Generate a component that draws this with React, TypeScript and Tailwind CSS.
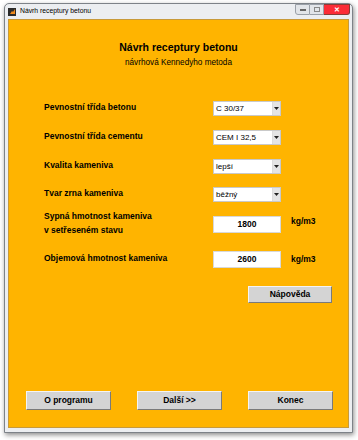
import React from "react";

const F = { fontFamily: '"Liberation Sans", Arial, sans-serif' };

function Select({ value }: { value: string }) {
  return (
    <div className="w-[68px] h-[15px] bg-white border border-[#c9c9c9] flex items-stretch">
      <div className="flex-1 text-[8px] leading-[13px] pl-[2px] text-black">{value}</div>
      <div className="w-[8px] bg-[#e4e4e4] border-l border-[#dcdcdc] flex items-center justify-center">
        <svg width="5" height="3" viewBox="0 0 5 3">
          <path d="M0 0 L5 0 L2.5 3 Z" fill="#222" />
        </svg>
      </div>
    </div>
  );
}

function NumInput({ value }: { value: string }) {
  return (
    <div className="w-[68px] h-[17px] bg-white border border-[#d8d8d8] text-[8.5px] font-bold leading-[15px] text-center text-black">
      {value}
    </div>
  );
}

function Btn({ label }: { label: string }) {
  return (
    <div className="w-[85px] h-[19px] bg-[#d4d4d4] border border-t-[#f4f4f4] border-l-[#f4f4f4] border-r-[#7a7a7a] border-b-[#7a7a7a] flex items-center justify-center text-[8.5px] font-bold text-black">
      {label}
    </div>
  );
}

function Row({ label, children, cls }: { label: React.ReactNode; children: React.ReactNode; cls: string }) {
  return (
    <div className={`flex items-center ${cls}`}>
      <div className="w-[169px] text-[8.5px] font-bold text-black leading-[14px] pb-[3px]">{label}</div>
      {children}
    </div>
  );
}

export default function App() {
  return (
    <div className="w-[358px] h-[440px] bg-white pt-[3px] pl-[4px]" style={F}>
      <div className="w-[349px] h-[430px] rounded-t-[5px] border border-[#7d8288] bg-[#eceef1] shadow-[1px_2px_5px_rgba(0,0,0,0.45)] flex flex-col">
        {/* title bar */}
        <div className="h-[15px] flex items-center pl-[3px] pr-[2px]">
          <div className="w-[8px] h-[8px] bg-[#2b2b2b] flex items-center justify-center">
            <svg width="7" height="7" viewBox="0 0 7 7">
              <path d="M1 6 L3 3 L4 4 L6 1 L6 6 Z" fill="#f08a1c" />
            </svg>
          </div>
          <span className="ml-[4px] text-[6.8px] text-black leading-none">Návrh receptury betonu</span>
          <div className="ml-auto self-start flex h-[11px]">
            <div className="w-[15px] border border-[#9aa0a8] rounded-bl-[3px] bg-[#e2e5e9] flex items-center justify-center">
              <div className="w-[6px] h-[2px] border border-[#666] bg-white" />
            </div>
            <div className="w-[14px] border-y border-r border-[#9aa0a8] bg-[#e2e5e9] flex items-center justify-center">
              <div className="w-[6px] h-[5px] border border-[#888]" />
            </div>
            <div className="w-[26px] border-y border-r border-[#8a3a34] rounded-br-[3px] bg-red-500 flex items-center justify-center">
              <span className="text-white text-[7px] font-bold leading-none">✕</span>
            </div>
          </div>
        </div>
        {/* content */}
        <div className="mx-[3px] mb-[4px] flex-1 bg-[#ffb400] border border-[#c89a3a] flex flex-col pl-[35px]">
          <div className="pr-[35px] text-center mt-[20px] text-[10.5px] font-bold leading-[14px] text-black">
            Návrh receptury betonu
          </div>
          <div className="pr-[35px] text-center mt-[3px] text-[8.2px] leading-[12px] text-black">
            návrhová Kennedyho metoda
          </div>
          <Row label="Pevnostní třída betonu" cls="mt-[32px] h-[15px]">
            <Select value="C 30/37" />
          </Row>
          <Row label="Pevnostní třída cementu" cls="mt-[14px] h-[15px]">
            <Select value="CEM I 32,5" />
          </Row>
          <Row label="Kvalita kameniva" cls="mt-[14px] h-[15px]">
            <Select value="lepší" />
          </Row>
          <Row label="Tvar zrna kameniva" cls="mt-[13px] h-[15px]">
            <Select value="běžný" />
          </Row>
          <div className="flex items-center mt-[14px] h-[17px]">
            <div className="w-[169px] text-[8.5px] font-bold text-black leading-[14px] pb-[3px]">
              Sypná hmotnost kameniva
              <br />v setřeseném stavu
            </div>
            <NumInput value="1800" />
            <span className="ml-[10px] text-[8.5px] font-bold text-black -mt-[7px]">kg/m3</span>
          </div>
          <Row label="Objemová hmotnost kameniva" cls="mt-[18px] h-[17px]">
            <NumInput value="2600" />
            <span className="ml-[10px] text-[8.5px] font-bold text-black">kg/m3</span>
          </Row>
          <div className="mt-[18px] pl-[204px]">
            <div className="w-[84px] h-[17px] bg-[#d4d4d4] border border-t-[#f4f4f4] border-l-[#f4f4f4] border-r-[#7a7a7a] border-b-[#7a7a7a] flex items-center justify-center text-[8.5px] font-bold text-black">
              Nápověda
            </div>
          </div>
          <div className="mt-auto mb-[17px] -ml-[18px] flex gap-[26px]">
            <Btn label="O programu" />
            <Btn label="Další >>" />
            <Btn label="Konec" />
          </div>
        </div>
      </div>
    </div>
  );
}
